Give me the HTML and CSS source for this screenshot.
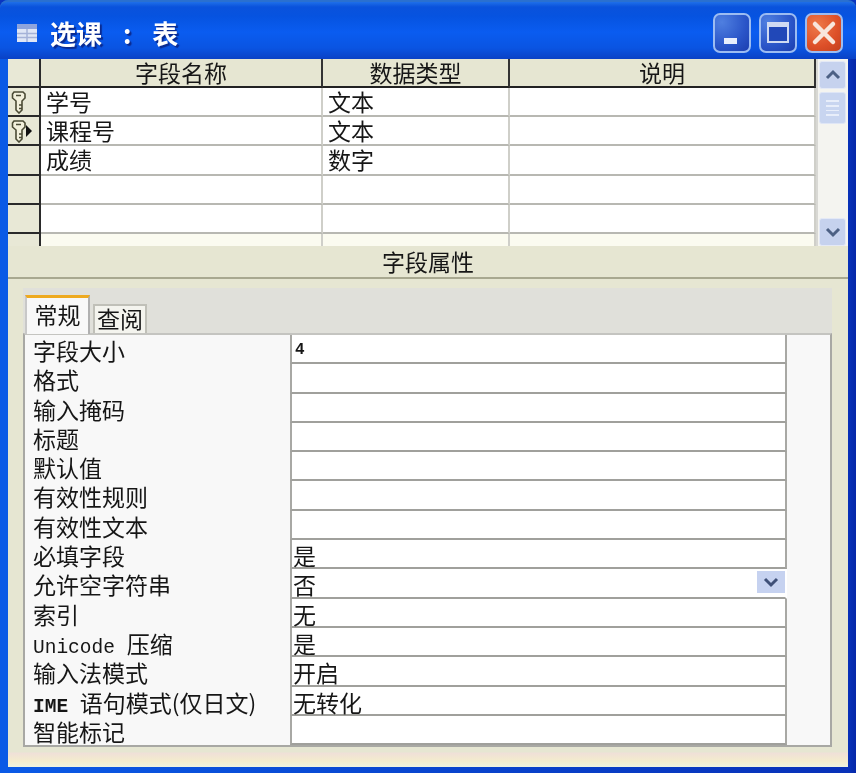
FILE: index.html
```html
<!DOCTYPE html>
<html lang="zh-CN">
<head>
<meta charset="utf-8">
<title>选课 : 表</title>
<link rel="stylesheet" href="styles.css">
</head>
<body>
<div class="window">
  <div class="titlebar">
    <svg class="title-icon" width="22" height="22" viewBox="0 0 22 22"><rect x="1" y="2" width="20" height="18" fill="#dfe6f6"/><rect x="1" y="2" width="20" height="5" fill="#8ea4dc"/><path d="M1 11.500H21M1 15.500H21M11 7V20" stroke="#a5b2d8" stroke-width="1.500"/></svg>
    <span class="title-text">选课 : 表</span>
    <div class="controls">
      <div class="ctl ctl-blue"><span class="min-glyph"></span></div>
      <div class="ctl ctl-blue"><span class="max-glyph"></span></div>
      <div class="ctl ctl-red"><svg width="26" height="26" viewBox="0 0 26 26"><path d="M4 4L22 22M22 4L4 22" stroke="#f8e6dc" stroke-width="4.500" stroke-linecap="round"/></svg></div>
    </div>
  </div>
  <div class="client">
    <div class="upper">
      <div class="grid">
        <div class="grow ghead">
          <div class="sel"></div><div class="c1">字段名称</div><div class="c2">数据类型</div><div class="c3">说明</div>
        </div>
        <div class="grow">
          <div class="sel"><svg class="key" width="15" height="24" viewBox="0 0 15 24"><use href="#keyicon"/></svg></div><div class="c1">学号</div><div class="c2">文本</div><div class="c3"></div>
        </div>
        <div class="grow">
          <div class="sel"><svg class="key" width="15" height="24" viewBox="0 0 15 24"><defs><g id="keyicon" fill="none" stroke="#4a4a34" stroke-width="1.600"><path d="M3 2H12L14 4V8L11 11V20L8 23L5 20V11L1.500 8V4Z" fill="#f2f0dc"/><path d="M5 5.500H10M11 15H8M11 18.500H8"/></g></defs><use href="#keyicon"/></svg><span class="pointer"></span></div><div class="c1">课程号</div><div class="c2">文本</div><div class="c3"></div>
        </div>
        <div class="grow">
          <div class="sel"></div><div class="c1">成绩</div><div class="c2">数字</div><div class="c3"></div>
        </div>
        <div class="grow"><div class="sel"></div><div class="c1"></div><div class="c2"></div><div class="c3"></div></div>
        <div class="grow"><div class="sel"></div><div class="c1"></div><div class="c2"></div><div class="c3"></div></div>
        <div class="grow gtail"><div class="sel"></div><div class="c1"></div><div class="c2"></div><div class="c3"></div></div>
      </div>
      <div class="vscroll">
        <div class="sbtn"><svg width="18" height="12" viewBox="0 0 18 12"><path d="M3 9L9 3L15 9" fill="none" stroke="#4d6185" stroke-width="3"/></svg></div>
        <div class="thumb"><i></i><i></i><i></i><i></i></div>
        <div class="track"></div>
        <div class="sbtn"><svg width="18" height="12" viewBox="0 0 18 12"><path d="M3 3L9 9L15 3" fill="none" stroke="#4d6185" stroke-width="3"/></svg></div>
      </div>
    </div>
    <div class="section-title">字段属性</div>
    <div class="lower">
      <div class="tabs">
        <div class="tab tab-active">常规</div>
        <div class="tab">查阅</div>
      </div>
      <div class="panel">
        <div class="prow"><div class="plabel">字段大小</div><div class="pval pval-small">4</div></div>
        <div class="prow"><div class="plabel">格式</div><div class="pval"></div></div>
        <div class="prow"><div class="plabel">输入掩码</div><div class="pval"></div></div>
        <div class="prow"><div class="plabel">标题</div><div class="pval"></div></div>
        <div class="prow"><div class="plabel">默认值</div><div class="pval"></div></div>
        <div class="prow"><div class="plabel">有效性规则</div><div class="pval"></div></div>
        <div class="prow"><div class="plabel">有效性文本</div><div class="pval"></div></div>
        <div class="prow"><div class="plabel">必填字段</div><div class="pval">是</div></div>
        <div class="prow"><div class="plabel">允许空字符串</div><div class="pval pval-combo">否<span class="combo-btn"><svg width="20" height="14" viewBox="0 0 20 14"><path d="M4 4L10 10L16 4" fill="none" stroke="#3f5078" stroke-width="3"/></svg></span></div></div>
        <div class="prow"><div class="plabel">索引</div><div class="pval">无</div></div>
        <div class="prow"><div class="plabel"><span class="mono">Unicode </span>压缩</div><div class="pval">是</div></div>
        <div class="prow"><div class="plabel">输入法模式</div><div class="pval">开启</div></div>
        <div class="prow"><div class="plabel"><span class="mono mono-b">IME </span>语句模式(仅日文)</div><div class="pval">无转化</div></div>
        <div class="prow"><div class="plabel">智能标记</div><div class="pval"></div></div>
      </div>
    </div>
  </div>
</div>
</body>
</html>
```

FILE: styles.css
```css
* { box-sizing: border-box; }
html, body { margin: 0; padding: 0; }
body {
  width: 856px;
  height: 773px;
  overflow: hidden;
  background: #0a35c0;
  font-family: "Noto Sans CJK SC", "Liberation Sans", sans-serif;
  font-size: 23px;
  color: #161616;
}
.window {
  width: 856px;
  height: 773px;
  display: flex;
  flex-direction: column;
  background: linear-gradient(90deg, #0a5ae6 0, #0a5ae6 7px, #0831b8 849px, #0628a8 856px);
  padding: 0 8px 6px 8px;
  border-radius: 8px 8px 0 0;
  filter: blur(0.4px);
}
.titlebar {
  height: 59px;
  margin: 0 -8px;
  padding: 4px 13px 0 16px;
  display: flex;
  align-items: center;
  background: linear-gradient(180deg, #1f6fe8 0, #0a52dc 5px, #0653e0 14px, #0a5cf0 30px, #0a54e2 46px, #0a43c8 56px, #0a3cc0 59px);
  border-top: 2px solid #2a70d0;
  border-radius: 8px 8px 0 0;
}
.title-icon { flex: none; }
.title-text {
  margin-left: 12px;
  color: #fff;
  font-size: 26px;
  font-weight: 700;
  word-spacing: 15px;
  line-height: 30px;
  white-space: pre;
  text-shadow: 2px 2px 1px #0a2a90;
}
.controls { margin-left: auto; display: flex; gap: 8px; }
.ctl {
  width: 38px;
  height: 40px;
  border: 2px solid #9cbcf2;
  border-radius: 7px;
  display: flex;
  align-items: center;
  justify-content: center;
  position: relative;
}
.ctl-blue { background: radial-gradient(circle at 20% 20%, #4f7fe0, #2a55c8 60%, #1c3fb0); }
.ctl-red { background: radial-gradient(circle at 30% 30%, #ee7a4a, #dd4f28 60%, #c2401e); }
.min-glyph { position: absolute; left: 9px; bottom: 7px; width: 13px; height: 6px; background: #e8eefc; }
.max-glyph { width: 22px; height: 21px; border: 2px solid #cfdaf2; border-top-width: 5px; background: #2148b8; }
.client {
  flex: 1;
  min-height: 0;
  display: flex;
  flex-direction: column;
  background: #e6e6d2;
}
.upper { display: flex; height: 187px; background: #fbfbf0; }
.grid { width: 808px; display: flex; flex-direction: column; overflow: hidden; }
.grow {
  display: grid;
  grid-template-columns: 33px 282px 187px 306px;
  height: 29.300px;
  line-height: 27px;
  background: #fff;
}
.grow > div {
  border-bottom: 2px solid #b8b8b2;
  border-right: 2px solid #cfcfc9;
  padding-left: 5px;
  white-space: nowrap;
}
.grow > .sel {
  background: #e8e8d6;
  border-right: 2px solid #2a2a2a;
  border-bottom: 2px solid #2a2a2a;
  padding: 0;
  display: flex;
  align-items: center;
  position: relative;
}
.key { margin-left: 3px; flex: none; }
.pointer {
  width: 0; height: 0;
  margin-left: 0;
  border-left: 6px solid #111;
  border-top: 6px solid transparent;
  border-bottom: 6px solid transparent;
}
.ghead { height: 29px; }
.ghead > div {
  background: #e6e6d2;
  border-bottom: 2px solid #222;
  border-right: 2px solid #333;
  text-align: center;
  padding: 0;
  line-height: 27px;
}
.gtail { height: 12px; background: #fbfbf0; }
.gtail > div { border-bottom: 0; background: #fbfbf0; }
.gtail > .sel { border-bottom: 0; background: #e8e8d6; }
.vscroll {
  flex: 1;
  display: flex;
  flex-direction: column;
  padding: 2px 2px 0 1px;
  background: #f4f4f0;
  border-left: 2px solid #d8d8d4;
}
.sbtn {
  height: 28px;
  background: #c6d2ee;
  border: 1px solid #e4e9f6;
  border-radius: 3px;
  display: flex;
  align-items: center;
  justify-content: center;
  flex: none;
}
.thumb {
  margin-top: 3px;
  height: 32px;
  flex: none;
  background: #c8d5f0;
  border: 1px solid #dfe6f6;
  border-radius: 3px;
  display: flex;
  flex-direction: column;
  gap: 3px;
  padding: 7px 6px;
}
.thumb i { display: block; height: 2px; background: #e8eefa; }
.track { flex: 1; }
.section-title {
  height: 33px;
  text-align: center;
  line-height: 31px;
  border-bottom: 2px solid #a8a890;
  background: #e6e6d2;
}
.lower {
  flex: 1;
  min-height: 0;
  padding: 9px 16px 0 15px;
  display: flex;
  flex-direction: column;
  background: linear-gradient(180deg, #e6e6d2 0, #e6e6d2 473px, #efe0d8 474px, #f3eccd 482px, #eef3e0 488px);
}
.tabs { height: 46px; flex: none; display: flex; align-items: flex-end; padding-left: 2px; background: #e0e0da; margin-bottom: -1px; }
.tab {
  width: 54px;
  height: 30px;
  margin-left: 3px;
  background: #f4f4ee;
  border: 2px solid #c0c0b8;
  border-bottom: 0;
  text-align: center;
  line-height: 25px;
}
.tab-active {
  width: 65px;
  height: 39px;
  margin-left: 0;
  background: #f8f8f8;
  border-top: 3px solid #eeaa20;
  border-left: 2px solid #c8c8c8;
  border-right: 2px solid #b0b0b0;
  line-height: 33px;
  position: relative;
  z-index: 1;
}
.panel {
  height: 414px;
  flex: none;
  background: #f8f8f8;
  border: 2px solid #a8a8a4;
  border-top-color: #c4c4c0;
  padding: 0 43px 0 8px;
}
.prow { display: flex; height: 29.300px; line-height: 30px; }
.plabel { width: 257px; flex: none; white-space: pre; }
.mono { font-family: "Liberation Mono", monospace; font-size: 19.500px; }
.mono-b { font-weight: 700; }
.pval {
  flex: 1;
  background: #fff;
  border-left: 2px solid #a8a8a4;
  border-right: 2px solid #a8a8a4;
  border-bottom: 2px solid #a0a09c;
  padding-left: 1px;
  white-space: nowrap;
}
.pval-small { font-family: "Liberation Mono", monospace; font-size: 16px; font-weight: 700; padding-left: 3px; }
.pval-combo { position: relative; border-right-color: transparent; }
.combo-btn {
  position: absolute;
  right: 0;
  top: 2px;
  width: 28px;
  height: 22px;
  background: #c6d2f0;
  display: flex;
  align-items: center;
  justify-content: center;
}
```
